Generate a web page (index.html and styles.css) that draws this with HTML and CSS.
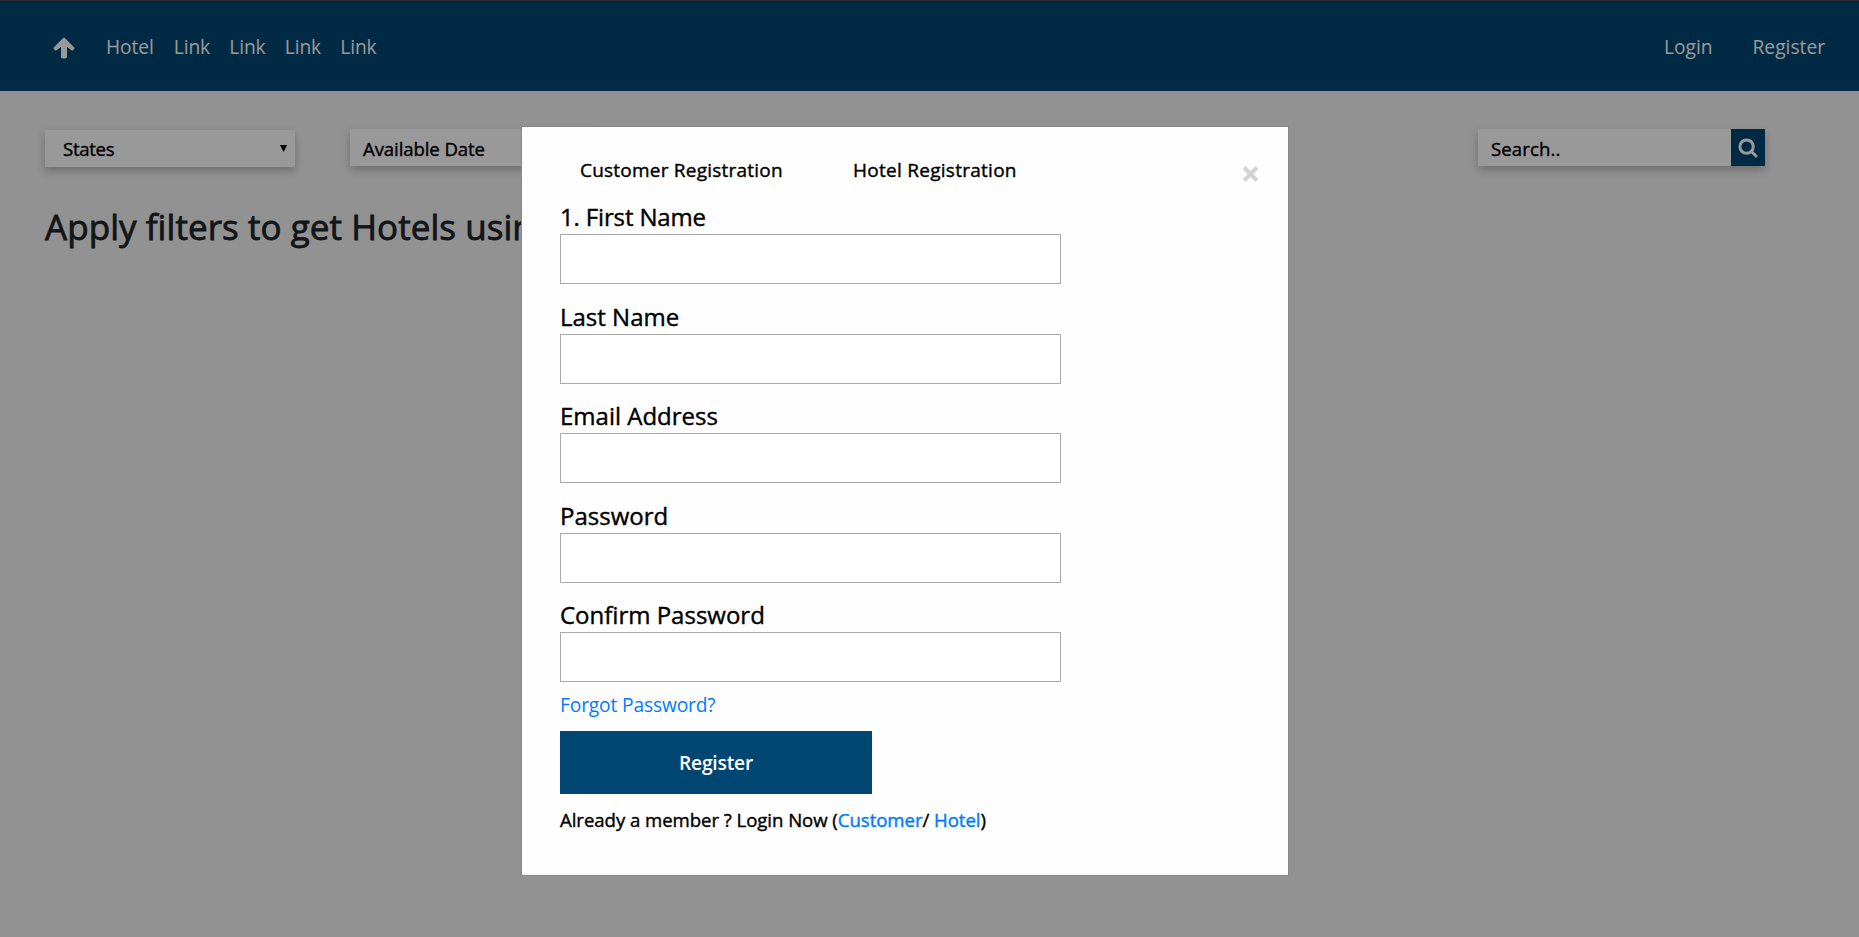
FILE: index.html
```html
<!DOCTYPE html>
<html lang="en">
<head>
<meta charset="utf-8">
<title>Hotel Registration</title>
<link rel="stylesheet" href="styles.css">
</head>
<body>
<nav class="navbar">
  <svg class="brand" viewBox="0 0 22 22"><path d="M10.1 1.1Q11 .3 11.9 1.1L21 10.2Q22 11.3 21 12.3L20 13.2Q19 14 18 13.1L14 9.7V19.8Q14 21.6 12.2 21.6H9.8Q8 21.6 8 19.8V9.7L4 13.1Q3 14 2 13.2L1 12.3Q0 11.3 1 10.2Z"/></svg>
  <div class="links"><a>Hotel</a><a>Link</a><a>Link</a><a>Link</a><a>Link</a></div>
  <div class="account"><a>Login</a><a>Register</a></div>
</nav>
<main class="page">
  <div class="filters">
    <div class="filter states"><span>States</span><svg class="caret" viewBox="0 0 7 7"><path d="M0 0H7L3.5 7Z"/></svg></div>
    <div class="filter date"><span>Available Date</span></div>
    <div class="search"><span>Search..</span><button class="search-btn"><svg viewBox="0 0 20 20"><circle cx="8.6" cy="8.6" r="6.7"/><path d="M13.5 13.5 18 18"/></svg></button></div>
  </div>
  <h1 class="headline">Apply filters to get Hotels using</h1>
</main>
<div class="overlay">
  <section class="modal">
    <header class="tabs"><span class="tab-customer">Customer Registration</span><span class="tab-hotel">Hotel Registration</span>
      <svg class="close" viewBox="0 0 17 16"><path d="M2 1.5 15 14.5M15 1.5 2 14.5"/></svg></header>
    <form class="form">
      <label class="field first"><span>1. First Name</span><input type="text"></label>
      <label class="field"><span>Last Name</span><input type="text"></label>
      <label class="field"><span>Email Address</span><input type="text"></label>
      <label class="field"><span>Password</span><input type="password"></label>
      <label class="field"><span>Confirm Password</span><input type="password"></label>
      <a class="forgot">Forgot Password?</a>
      <button type="button" class="submit">Register</button>
      <p class="member">Already a member ? Login Now (<a>Customer</a>/ <a>Hotel</a>)</p>
    </form>
  </section>
</div>
</body>
</html>
```
FILE: styles.css
```css
* { box-sizing: border-box; }
body { margin: 0; height: 937px; overflow: hidden; background: #f3f3f3; font-family: "Open Sans", "Noto Sans", sans-serif; font-size: 18.6px; color: #000; }
.navbar { height: 91px; background: #004672; border-top: 1px solid #484848; display: flex; align-items: center; padding: 1px 34px 0 53px; color: #fff; font-size: 19.2px; white-space: nowrap; }
.brand { width: 22px; height: 22px; fill: #fff; margin: 2px 31px 0 0; }
.links { display: flex; letter-spacing: -.1px; }
.links a { width: 55.5px; }
.links a:first-child { width: 67.8px; }
.account { margin-left: auto; display: flex; gap: 40px; letter-spacing: 0; }
.page { padding: 38px 45px 0 45px; }
.filters { display: flex; height: 38px; letter-spacing: -.1px; white-space: nowrap; }
.filter, .search { height: 37px; display: flex; align-items: center; background: #fff; box-shadow: 0 4px 8px rgba(0,0,0,.24); }
.filter span, .search span, .tabs span, .field span, .member { -webkit-text-stroke: .4px currentColor; }
.states { width: 250px; margin-top: 1px; padding: 0 8px 0 18px; justify-content: space-between; }
.states span { letter-spacing: -.3px; }
.caret { width: 7px; height: 7px; }
.date { width: 250px; margin-left: 55px; padding: 2px 0 0 13px; }
.search { width: 287px; margin-left: auto; margin-right: 49px; padding-left: 13px; justify-content: space-between; }
.search span { padding-top: 1px; letter-spacing: .1px; }
.search-btn { width: 34px; height: 37px; border: 0; background: #004672; padding: 1px 0 0 0; display: grid; place-items: center; }
.search-btn svg { width: 20px; height: 20px; fill: none; stroke: #fff; stroke-width: 3; stroke-linecap: round; }
.headline { margin: 36px 0 0; font-size: 35px; line-height: 48px; font-weight: 400; color: #212529; letter-spacing: .06px; white-space: nowrap; -webkit-text-stroke: .8px currentColor; }
.overlay { position: fixed; inset: 0; background: rgba(0,0,0,.4); display: flex; justify-content: center; align-items: flex-start; padding: 126px 49px 0 0; }
.modal { width: 768px; height: 750px; background: #fefefe; border: 1px solid #888; padding: 25px 27px 0 38px; white-space: nowrap; }
.tabs { display: flex; height: 48px; align-items: flex-start; line-height: 36px; font-size: 19px; padding-left: 20px; letter-spacing: .22px; }
.tab-customer { width: 273px; }
.tab-hotel { letter-spacing: .27px; }
.close { width: 17px; height: 16px; margin: 14px 2px 0 auto; stroke: #d3d3d3; stroke-width: 3.9; }
.form { display: flex; flex-direction: column; align-items: flex-start; }
.field { display: block; height: 99.6px; font-size: 24px; line-height: 34px; }
.field > span { display: block; height: 34px; }
.first > span { letter-spacing: -.15px; }
.field input { display: block; width: 501px; height: 50px; border: 1px solid #a9a9a9; background: #fff; padding: 0 8px; font: inherit; outline: 0; }
.forgot { color: #007bff; font-size: 19.2px; line-height: 30px; margin-top: -8px; height: 41px; letter-spacing: -.15px; }
.submit { width: 312px; height: 63px; border: 0; padding: 0; background: #004672; color: #fff; font: 600 19.2px "Open Sans", sans-serif; letter-spacing: -.2px; }
.member { margin: 11px 0 0; line-height: 30px; letter-spacing: -.05px; }
.member a { color: #007bff; }
```
